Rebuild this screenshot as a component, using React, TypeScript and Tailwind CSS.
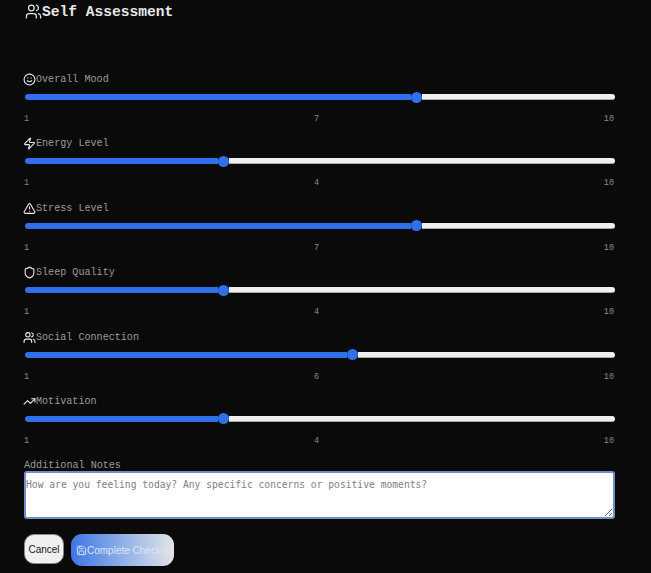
import { Smile, Zap, TriangleAlert, Shield, Users, TrendingUp, Save } from "lucide-react";
import type { LucideIcon } from "lucide-react";

const sliders: { label: string; value: number; Icon: LucideIcon }[] = [
  { label: "Overall Mood", value: 7, Icon: Smile },
  { label: "Energy Level", value: 4, Icon: Zap },
  { label: "Stress Level", value: 7, Icon: TriangleAlert },
  { label: "Sleep Quality", value: 4, Icon: Shield },
  { label: "Social Connection", value: 6, Icon: Users },
  { label: "Motivation", value: 4, Icon: TrendingUp },
];

function SliderRow({ label, value, Icon }: { label: string; value: number; Icon: LucideIcon }) {
  const pct = (value - 1) / 9;
  return (
    <div className="h-[64.4px] flex flex-col">
      <label className="h-[14px] flex items-center text-[10.1px] leading-none text-[#9a9a9a]">
        <Icon className="w-[13px] h-[13px] -ml-px -mt-px text-[#ececec] shrink-0" strokeWidth={2} />
        {label}
      </label>
      <div className="mt-[4.5px] h-[11px] pl-px flex items-center">
        <div className="flex-1 h-[11px] flex items-center">
          <div
            className="h-[6px] bg-[#3070ea] rounded-l-full shrink-0"
            style={{ width: `calc((100% - 11px) * ${pct})` }}
          />
          <div className="w-[11px] h-[11px] rounded-full bg-[#3070ea] shrink-0" />
          <div className="flex-1 h-[6px] bg-[#efefef] rounded-r-full border-b border-[#a8a8a8]" />
        </div>
      </div>
      <div className="mt-[11.5px] pr-[1px] flex justify-between text-[8.5px] leading-[10px] text-[#888888]">
        <span>1</span>
        <span>{value}</span>
        <span>10</span>
      </div>
    </div>
  );
}

export default function App() {
  return (
    <div className="w-[651px] h-[573px] overflow-hidden bg-[#0a0a0a] font-['Liberation_Mono',monospace] px-6">
      <div className="pt-[4px] h-[73px] flex items-start">
        <Users className="w-[17px] h-[17px] mt-[-1px] text-[#e5e5e5] ml-px shrink-0" strokeWidth={1.75} />
        <h2 className="text-[14.6px] leading-[17px] font-bold text-[#e8e8e8]">Self Assessment</h2>
      </div>

      <div className="w-[591px]">
        {sliders.map((s) => (
          <SliderRow key={s.label} label={s.label} value={s.value} Icon={s.Icon} />
        ))}
      </div>

      <div className="mt-[1px]">
        <label className="block h-[12px] text-[10.1px] leading-[12px] text-[#9a9a9a]">Additional Notes</label>
        <textarea
          readOnly
          placeholder="How are you feeling today? Any specific concerns or positive moments?"
          className="block -mt-[1px] w-[591px] h-[48px] bg-white rounded-[3px] border-2 border-[#6f8fc9] px-0 py-[6px] text-[9.67px] leading-[12px] font-['DejaVu_Sans_Mono',monospace] outline-none placeholder:text-[#808080]"
        />
      </div>

      <div className="mt-[15px] flex items-start gap-[7px] font-['Liberation_Sans',sans-serif]">
        <button className="w-[40px] h-[30px] rounded-[10px] bg-[#f0f0f0] border border-[#8a8a8a] text-[10px] text-[#1a1a1a]">
          Cancel
        </button>
        <button className="w-[103px] h-[32px] rounded-[11px] bg-gradient-to-r from-[#3f74e4] to-[#e4e4e4] flex items-center pl-[5px] whitespace-nowrap text-[10px] text-[#dbe6fb]">
          <Save className="w-[11px] h-[11px] shrink-0" strokeWidth={2} />
          Complete Check-in
        </button>
      </div>
    </div>
  );
}
